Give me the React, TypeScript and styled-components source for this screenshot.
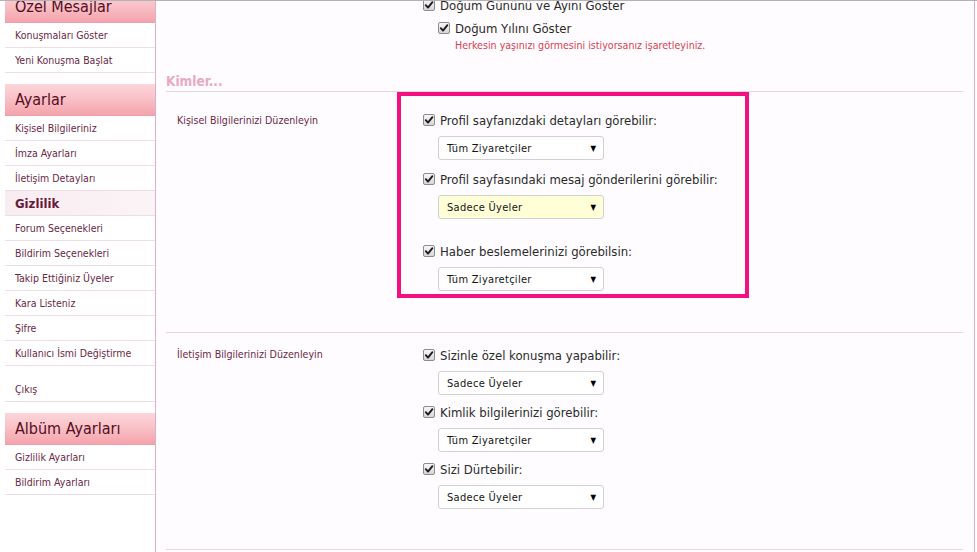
import React from "react";
import styled, { createGlobalStyle } from "styled-components";

const Global = createGlobalStyle`
  html, body { margin: 0; padding: 0; background: #ffffff; }
  body { font-family: "DejaVu Sans Condensed", "DejaVu Sans", sans-serif; }
  * { box-sizing: border-box; }
`;

const Page = styled.div`
  width: 977px;
  height: 552px;
  overflow: hidden;
  border-top: 1px solid #b3b3b3;
  display: flex;
  align-items: stretch;
  background: #ffffff;
`;

/* ---------- Sidebar ---------- */
const Sidebar = styled.nav`
  width: 150px;
  margin-left: 5px;
  margin-top: -10px;
  display: flex;
  flex-direction: column;
  flex: none;
`;

const SideHeader = styled.div<{ $gap?: boolean }>`
  height: 32px;
  margin-top: ${(p) => (p.$gap ? "11px" : "0")};
  padding-left: 10px;
  display: flex;
  align-items: center;
  font-size: 16px;
  color: #550d22;
  background: linear-gradient(#fbd6da 0%, #f9c2c8 45%, #f4a3ab 100%);
  border-bottom: 1px solid #e9a2ab;
`;

const SideItem = styled.div<{ $tall?: boolean }>`
  height: ${(p) => (p.$tall ? "36px" : "25px")};
  padding-left: 10px;
  padding-top: ${(p) => (p.$tall ? "10px" : "0")};
  display: flex;
  align-items: center;
  font-size: 10.5px;
  color: #6a2846;
  border-bottom: 1px solid #eddde5;
  background: #ffffff;
`;

const SideSub = styled.div`
  height: 25px;
  padding-left: 10px;
  display: flex;
  align-items: center;
  font-size: 13px;
  font-weight: bold;
  color: #651a38;
  border-bottom: 1px solid #eddde5;
  background: linear-gradient(90deg, #f8ecf1, #fbf4f7);
`;

/* ---------- Content ---------- */
const Content = styled.main`
  flex: 1;
  margin-right: 2px;
  border-left: 1px solid #dbb1c7;
  border-right: 1px solid #dbb1c7;
  background: #fefcfe;
  display: flex;
  flex-direction: column;
`;

const TopBlock = styled.div`
  margin-top: -5px;
  padding-left: 267px;
  display: flex;
  flex-direction: column;
`;

const CheckLine = styled.label<{ $indent?: number; $mt?: number }>`
  height: 18px;
  display: flex;
  align-items: center;
  gap: 5px;
  margin-left: ${(p) => p.$indent ?? 0}px;
  margin-top: ${(p) => p.$mt ?? 0}px;
  font-size: 13px;
  color: #2b2b2b;
`;

const Hint = styled.div`
  margin-left: 32px;
  margin-top: 1px;
  line-height: 14px;
  font-size: 10.6px;
  color: #d9404f;
`;

const Section = styled.section`
  margin: 20px 11px 0 10px;
  display: flex;
  flex-direction: column;
`;

const SectionTitle = styled.h3`
  margin: 0;
  line-height: 18px;
  padding-bottom: 1px;
  font-size: 13.5px;
  font-weight: bold;
  color: #eaa9c2;
  border-bottom: 1px solid #ecd5df;
`;

const Row = styled.div<{ $pb: number }>`
  display: grid;
  grid-template-columns: 231px 1fr;
  padding-bottom: ${(p) => p.$pb}px;
  border-bottom: 1px solid #ecd5df;
`;

const RowLabel = styled.div<{ $pt: number }>`
  padding: ${(p) => p.$pt}px 0 0 11px;
  line-height: 14px;
  font-size: 10.6px;
  color: #6a2846;
`;

const Options = styled.div`
  padding: 13px 0 0 26px;
  display: flex;
  flex-direction: column;
`;

const Highlight = styled.div`
  width: 352px;
  border: 4px solid #f3117f;
  padding: 15px 0 3px 22px;
  display: flex;
  flex-direction: column;
`;

const Item = styled.div<{ $mt: number }>`
  margin-top: ${(p) => p.$mt}px;
  display: flex;
  flex-direction: column;
`;

const CheckBox = styled.span`
  width: 12px;
  height: 12px;
  flex: none;
  border: 1px solid #8d8d8d;
  border-radius: 2px;
  background: linear-gradient(#f7f7f7, #d6d6d6);
  display: flex;
  align-items: center;
  justify-content: center;
`;

const Select = styled.div<{ $yellow?: boolean }>`
  width: 166px;
  height: 24px;
  margin: 7px 0 0 15px;
  padding: 0 7px 0 8px;
  border: 1px solid #d0d0d0;
  border-radius: 3px;
  background: ${(p) => (p.$yellow ? "#fefed7" : "#ffffff")};
  display: flex;
  align-items: center;
  justify-content: space-between;
  font-size: 11px;
  letter-spacing: 0.3px;
  color: #151515;
`;

const Arrow = styled.span`
  font-size: 8px;
  color: #000;
  letter-spacing: 0;
`;

const Check = () => (
  <CheckBox>
    <svg width="10" height="10" viewBox="0 0 10 10">
      <path d="M1.8 5.2 L4 7.6 L8.4 2.2" fill="none" stroke="#1c1c1c" strokeWidth="1.9" strokeLinecap="round" strokeLinejoin="round" />
    </svg>
  </CheckBox>
);

type Opt = { label: string; value: string; yellow?: boolean; mt: number };

const Option = ({ o }: { o: Opt }) => (
  <Item $mt={o.mt}>
    <CheckLine>
      <Check />
      {o.label}
    </CheckLine>
    <Select $yellow={o.yellow}>
      <span>{o.value}</span>
      <Arrow>▼</Arrow>
    </Select>
  </Item>
);

const kimler: Opt[] = [
  { label: "Profil sayfanızdaki detayları görebilir:", value: "Tüm Ziyaretçiler", mt: 0 },
  { label: "Profil sayfasındaki mesaj gönderilerini görebilir:", value: "Sadece Üyeler", yellow: true, mt: 10 },
  { label: "Haber beslemelerinizi görebilsin:", value: "Tüm Ziyaretçiler", mt: 23 },
];

const iletisim: Opt[] = [
  { label: "Sizinle özel konuşma yapabilir:", value: "Sadece Üyeler", mt: 0 },
  { label: "Kimlik bilgilerinizi görebilir:", value: "Tüm Ziyaretçiler", mt: 8 },
  { label: "Sizi Dürtebilir:", value: "Sadece Üyeler", mt: 8 },
];

export default function App() {
  return (
    <>
      <Global />
      <Page>
        <Sidebar>
          <SideHeader>Özel Mesajlar</SideHeader>
          <SideItem>Konuşmaları Göster</SideItem>
          <SideItem>Yeni Konuşma Başlat</SideItem>
          <SideHeader $gap>Ayarlar</SideHeader>
          <SideItem>Kişisel Bilgileriniz</SideItem>
          <SideItem>İmza Ayarları</SideItem>
          <SideItem>İletişim Detayları</SideItem>
          <SideSub>Gizlilik</SideSub>
          <SideItem>Forum Seçenekleri</SideItem>
          <SideItem>Bildirim Seçenekleri</SideItem>
          <SideItem>Takip Ettiğiniz Üyeler</SideItem>
          <SideItem>Kara Listeniz</SideItem>
          <SideItem>Şifre</SideItem>
          <SideItem>Kullanıcı İsmi Değiştirme</SideItem>
          <SideItem $tall>Çıkış</SideItem>
          <SideHeader $gap>Albüm Ayarları</SideHeader>
          <SideItem>Gizlilik Ayarları</SideItem>
          <SideItem>Bildirim Ayarları</SideItem>
        </Sidebar>
        <Content>
          <TopBlock>
            <CheckLine>
              <Check />
              Doğum Gününü ve Ayını Göster
            </CheckLine>
            <CheckLine $indent={15} $mt={5}>
              <Check />
              Doğum Yılını Göster
            </CheckLine>
            <Hint>Herkesin yaşınızı görmesini istiyorsanız işaretleyiniz.</Hint>
          </TopBlock>
          <Section>
            <SectionTitle>Kimler...</SectionTitle>
            <Row $pb={34}>
              <RowLabel $pt={21}>Kişisel Bilgilerinizi Düzenleyin</RowLabel>
              <div>
                <Highlight>
                  {kimler.map((o) => (
                    <Option key={o.label} o={o} />
                  ))}
                </Highlight>
              </div>
            </Row>
            <Row $pb={40}>
              <RowLabel $pt={14}>İletişim Bilgilerinizi Düzenleyin</RowLabel>
              <Options>
                {iletisim.map((o) => (
                  <Option key={o.label} o={o} />
                ))}
              </Options>
            </Row>
          </Section>
        </Content>
      </Page>
    </>
  );
}
